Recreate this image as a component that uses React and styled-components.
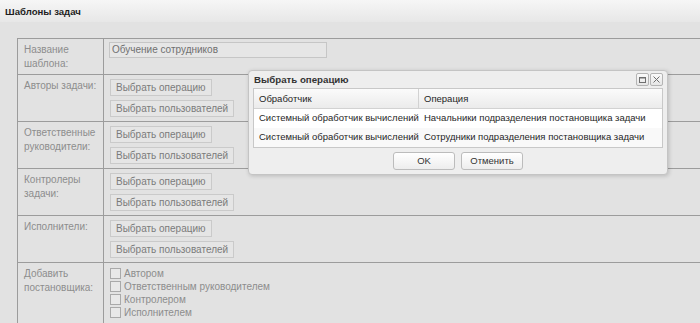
import React from 'react'
import styled, { createGlobalStyle } from 'styled-components'

const GlobalStyle = createGlobalStyle`
html, body {
    margin:0;
    padding:0;
    background:#e2e2e2;
    overflow:hidden;
}
body {
    font-family:"Liberation Sans",Arial,sans-serif;
    font-size:10px;
}
`;

const Page = styled.div`
position:relative;
width:700px;
height:323px;
overflow:hidden;
background:#e2e2e2;
`;

const Header = styled.div`
height:22px;
display:flex;
align-items:center;
padding-left:5px;
background:linear-gradient(#f6f6f6,#e7e7e7);
font-weight:bold;
font-size:9.6px;
color:#1e1e1e;
`;

const Content = styled.div`
padding:16px 0 0 17px;
`;

const FormTable = styled.div`
display:grid;
grid-template-columns:86px 1fr;
width:700px;
border-top:1px solid #9c9c9c;
border-left:1px solid #9c9c9c;
`;

const Label = styled.div`
padding:4px 2px 3px 6px;
line-height:14px;
color:#8d8d8d;
white-space:nowrap;
border-right:1px solid #9c9c9c;
border-bottom:1px solid #9c9c9c;
`;

const Field = styled.div`
display:flex;
flex-direction:column;
align-items:flex-start;
gap:${p => p.gap || 0}px;
padding:${p => p.pad || '4px 6px'};
border-bottom:1px solid #9c9c9c;
`;

const TextInput = styled.div`
width:214px;
height:14px;
line-height:14px;
padding-left:2px;
border:1px solid #c6c6c6;
background:#e6e6e6;
color:#707070;
`;

const FormButton = styled.div`
height:15px;
line-height:15px;
padding:0 5px;
border:1px solid #cacaca;
background:#e5e5e5;
color:#7b7b7b;
`;

const CheckRow = styled.label`
display:flex;
align-items:center;
height:13px;
color:#8d8d8d;
`;

const Box = styled.span`
width:9px;
height:9px;
margin-right:3px;
border:1px solid #a9a9a9;
background:#e8e8e8;
`;

const Window = styled.div`
position:absolute;
left:248px;
top:70px;
width:410px;
height:103px;
display:flex;
flex-direction:column;
border:1px solid #c4c4c4;
border-radius:4px;
background:#eeeeee;
box-shadow:1px 1px 4px rgba(0,0,0,0.18);
padding:0 4px;
font-size:9.5px;
`;

const WinHeader = styled.div`
height:17px;
display:flex;
align-items:center;
justify-content:space-between;
padding-left:1px;
font-weight:bold;
font-size:9.7px;
color:#333;
`;

const Tools = styled.div`
display:flex;
gap:1px;
`;

const Tool = styled.div`
width:11px;
height:11px;
border:1px solid #b4b4b4;
border-radius:2px;
background:linear-gradient(#fafafa,#e6e6e6);
display:flex;
align-items:center;
justify-content:center;
`;

const Grid = styled.div`
border:1px solid #c8c8c8;
background:#fff;
`;

const GridRow = styled.div`
display:grid;
grid-template-columns:165px 1fr;
height:${p => p.head ? 19 : 18}px;
line-height:${p => p.head ? 19 : 18}px;
background:${p => p.head ? 'linear-gradient(#fbfbfb,#ebebeb)' : p.alt ? '#f9f9f9' : '#fff'};
border-bottom:1px solid ${p => p.head ? '#d2d2d2' : 'transparent'};
color:#1f1f1f;
`;

const Cell = styled.div`
padding-left:5px;
white-space:nowrap;
overflow:hidden;
border-right:${p => p.sep ? '1px solid #d2d2d2' : 'none'};
`;

const WinFooter = styled.div`
display:flex;
justify-content:center;
gap:6px;
padding-top:4px;
`;

const WinButton = styled.div`
width:60px;
height:16px;
line-height:16px;
text-align:center;
border:1px solid #bcbcbc;
border-radius:3px;
background:linear-gradient(#ffffff,#ededed);
color:#333;
`;

const roles = [
    { label: ['Авторы задачи:'] },
    { label: ['Ответственные', 'руководители:'] },
    { label: ['Контролеры', 'задачи:'] },
    { label: ['Исполнители:'] },
]

const checks = ['Автором', 'Ответственным руководителем', 'Контролером', 'Исполнителем']

const ops = [
    ['Системный обработчик вычислений', 'Начальники подразделения постановщика задачи'],
    ['Системный обработчик вычислений', 'Сотрудники подразделения постановщика задачи'],
]

const Lines = ({ lines }) => lines.map((l, i) => <div key={i}>{l}</div>)

function OperationWindow() {
    return (
        <Window>
            <WinHeader>
                <span>Выбрать операцию</span>
                <Tools>
                    <Tool>
                        <svg width="9" height="9" viewBox="0 0 9 9">
                            <rect x="1.5" y="2.5" width="6" height="5" fill="none" stroke="#6f6f6f" strokeWidth="1" />
                            <line x1="1.5" y1="3" x2="7.5" y2="3" stroke="#6f6f6f" strokeWidth="1" />
                        </svg>
                    </Tool>
                    <Tool>
                        <svg width="9" height="9" viewBox="0 0 9 9">
                            <path d="M1.5 1.5L7.5 7.5M7.5 1.5L1.5 7.5" stroke="#6f6f6f" strokeWidth="1" />
                        </svg>
                    </Tool>
                </Tools>
            </WinHeader>
            <Grid>
                <GridRow head>
                    <Cell sep>Обработчик</Cell>
                    <Cell>Операция</Cell>
                </GridRow>
                {ops.map((r, i) => (
                    <GridRow key={i} alt={i % 2 === 1}>
                        <Cell>{r[0]}</Cell>
                        <Cell>{r[1]}</Cell>
                    </GridRow>
                ))}
            </Grid>
            <WinFooter>
                <WinButton>OK</WinButton>
                <WinButton>Отменить</WinButton>
            </WinFooter>
        </Window>
    )
}

export default function App() {
    return (
        <Page>
            <GlobalStyle />
            <Header>Шаблоны задач</Header>
            <Content>
                <FormTable>
                    <Label><Lines lines={['Название', 'шаблона:']} /></Label>
                    <Field pad="3px 5px">
                        <TextInput>Обучение сотрудников</TextInput>
                    </Field>
                    {roles.map((r, i) => (
                        <React.Fragment key={i}>
                            <Label><Lines lines={r.label} /></Label>
                            <Field gap={4}>
                                <FormButton>Выбрать операцию</FormButton>
                                <FormButton>Выбрать пользователей</FormButton>
                            </Field>
                        </React.Fragment>
                    ))}
                    <Label><Lines lines={['Добавить', 'постановщика:']} /></Label>
                    <Field pad="4px 6px 6px">
                        {checks.map(c => (
                            <CheckRow key={c}><Box />{c}</CheckRow>
                        ))}
                    </Field>
                </FormTable>
            </Content>
            <OperationWindow />
        </Page>
    )
}
